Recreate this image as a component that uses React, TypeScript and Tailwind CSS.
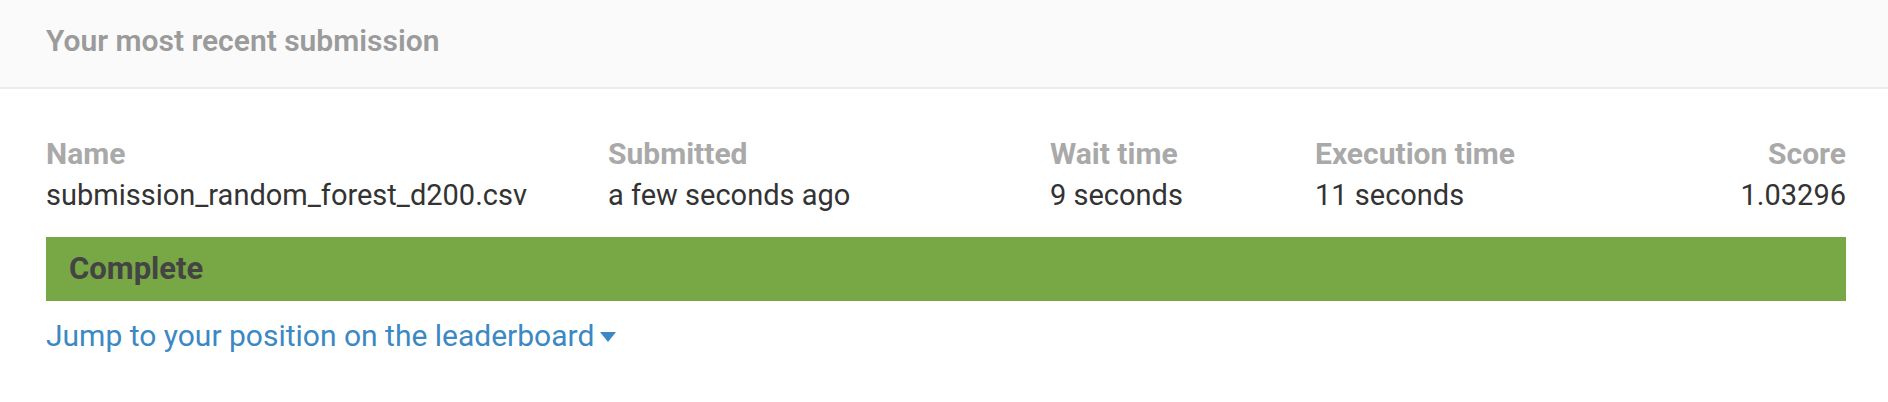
const columns = [
  { label: 'Name', value: 'submission_random_forest_d200.csv' },
  { label: 'Submitted', value: 'a few seconds ago' },
  { label: 'Wait time', value: '9 seconds' },
  { label: 'Execution time', value: '11 seconds' },
];

export default function App() {
  return (
    <div className="min-h-[402px] bg-white font-['Roboto',sans-serif]">
      <div className="flex h-[89px] items-center border-b-2 border-[#ececec] bg-[#fafafa] px-[46px] pb-[6px]">
        <h2 className="text-[30px] font-semibold text-[#9b9b9b]">Your most recent submission</h2>
      </div>

      <div className="pl-[46px] pr-[42px] pt-[44px]">
        <div className="grid grid-cols-[562px_442px_265px_1fr_auto]">
          {columns.map((col) => (
            <div key={col.label}>
              <div className="text-[30px] font-bold leading-[42px] text-[#a9a9a9]">{col.label}</div>
              <div className="text-[29px] leading-[41px] text-[#333]">{col.value}</div>
            </div>
          ))}
          <div className="text-right">
            <div className="text-[30px] font-bold leading-[42px] text-[#a9a9a9]">Score</div>
            <div className="text-[29px] leading-[41px] text-[#333]">1.03296</div>
          </div>
        </div>

        <div className="mt-[21px] flex h-[64px] items-center bg-[#78a846] px-[23px]">
          <span className="text-[31px] font-bold text-[#444]">Complete</span>
        </div>

        <a href="#" className="mt-[15px] flex items-center gap-[6px] text-[30px] leading-[40px] text-[#3b88c3]">
          Jump to your position on the leaderboard
          <svg width="16" height="10" viewBox="0 0 16 10" className="mt-[2px]">
            <path d="M0 0h16L8 10z" fill="currentColor" />
          </svg>
        </a>
      </div>
    </div>
  );
}
